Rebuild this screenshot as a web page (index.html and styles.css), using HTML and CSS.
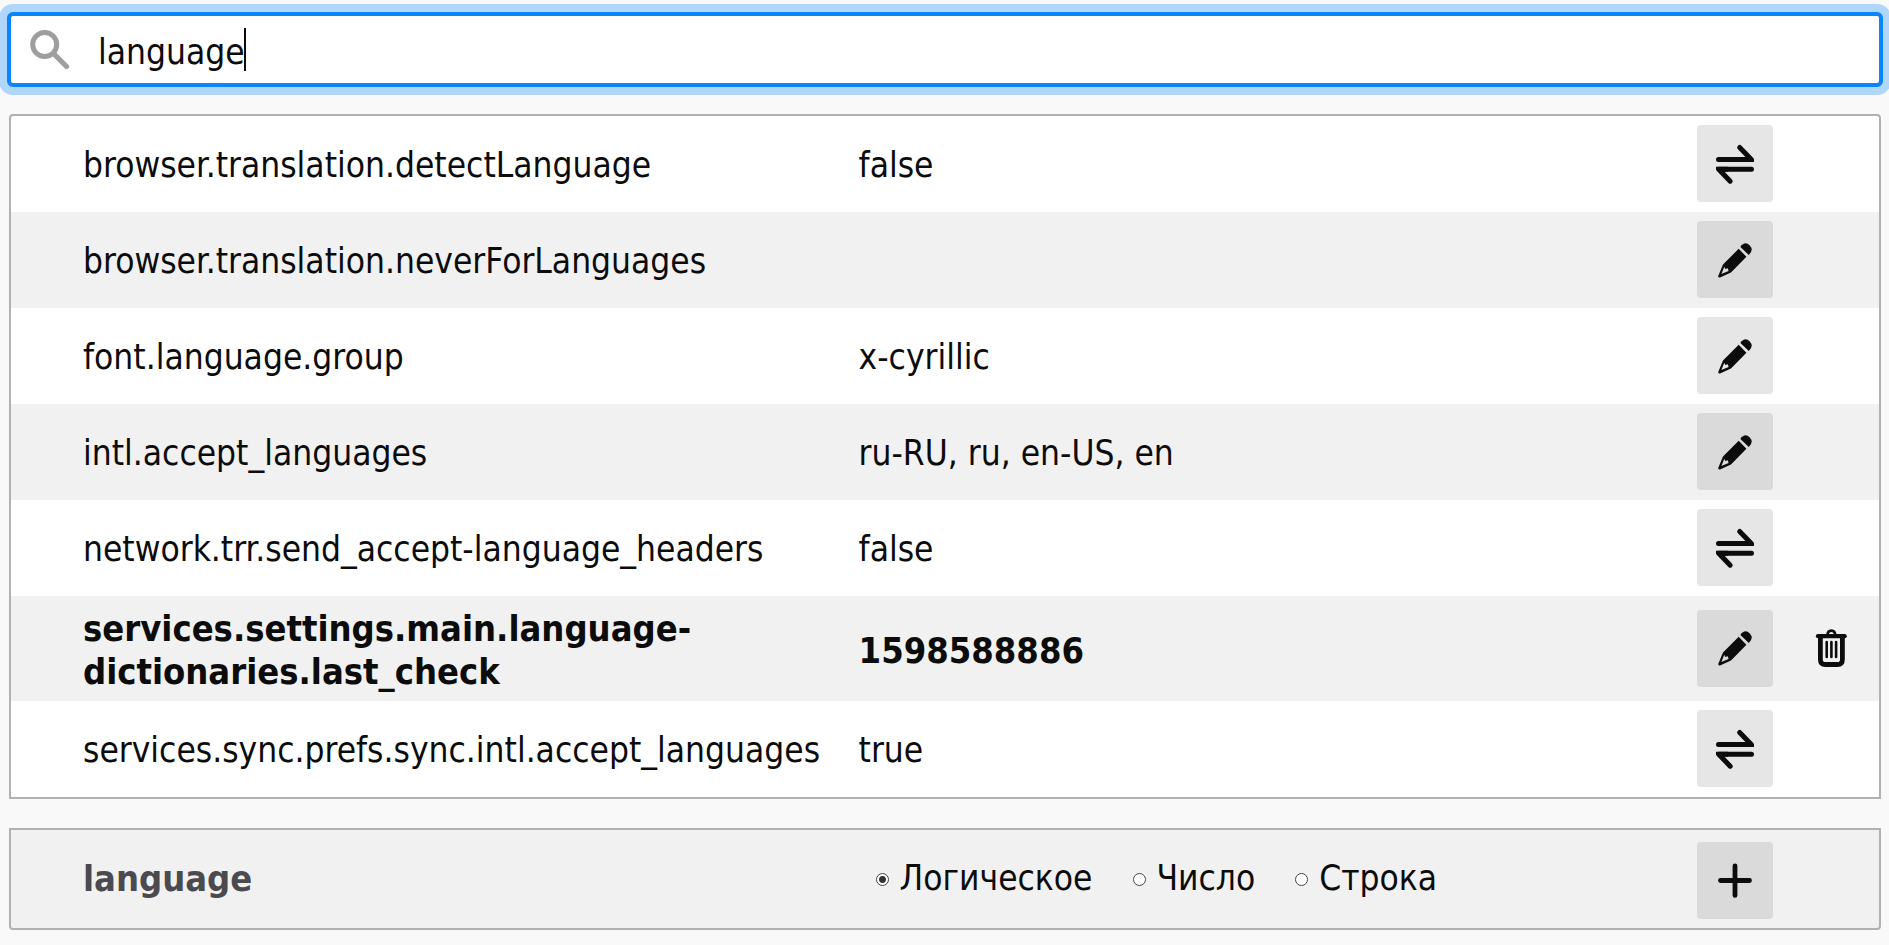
FILE: index.html
```html
<!DOCTYPE html>
<html lang="ru">
<head>
<meta charset="utf-8">
<title>about:config</title>
<link rel="stylesheet" href="styles.css">
</head>
<body>
<svg class="defs" aria-hidden="true">
  <symbol id="toggle" viewBox="0 0 76 76">
    <path d="M21.5 33.5H54.3L42.7 21.5M54.5 43.2H21.7L33.2 55.2" fill="none" stroke="currentColor" stroke-width="5" stroke-linecap="round" stroke-linejoin="round"/>
    <path d="M45 31H52L57 33V36H45ZM31 45.7H24L19 43.7V40.7H31Z" fill="currentColor"/>
  </symbol>
  <symbol id="pencil" viewBox="0 0 76 76">
    <path fill="currentColor" fill-rule="evenodd" d="M41.7 26.7L49.4 34.8L34 50.5L23 55.4Q20.9 55.8 21.3 53.8L26 42.6ZM27.3 44.7L24.4 51.9L31.6 49L30.8 46.2L28.3 47Z"/>
    <path fill="currentColor" d="M43.4 25Q45.6 21.3 48.8 21.3Q50.6 21.4 52.5 23.3Q54.7 25.6 54.7 27.8Q54.6 30.6 51.8 33Z"/>
  </symbol>
  <symbol id="trash" viewBox="0 0 76 76">
    <path d="M34.4 25.5C34.6 19 42.1 19 42.3 25.5" fill="none" stroke="currentColor" stroke-width="2.6"/>
    <path d="M25 26.2H51.7" stroke="currentColor" stroke-linecap="round" stroke-width="4.2"/>
    <path d="M27.4 28V49.5Q27.4 54.5 32.4 54.5H44.4Q49.4 54.5 49.4 49.5V28" fill="none" stroke="currentColor" stroke-width="4.8"/>
    <path d="M33.7 32V47M38.4 32V47M43.1 32V47" stroke="currentColor" stroke-width="2.6" stroke-linecap="round"/>
  </symbol>
  <symbol id="plus" viewBox="0 0 76 76">
    <path d="M38 24V53.4M23.5 38.5H52.5" stroke="currentColor" stroke-width="4.8" stroke-linecap="round"/>
  </symbol>
</svg>

<div class="search">
  <svg class="search-icon" viewBox="0 0 40 40" aria-hidden="true">
    <circle cx="14.7" cy="14.5" r="12" fill="none" stroke="#9e9e9e" stroke-width="5"/>
    <path d="M23.5 23.5L36.5 36.5" stroke="#9e9e9e" stroke-width="5.2" stroke-linecap="round"/>
  </svg>
  <input class="search-input" type="text" value="language" aria-label="Поиск">
  <span class="caret"></span>
</div>

<table class="prefs">
  <colgroup><col class="col-name"><col><col class="col-button"><col class="col-button"></colgroup>
  <tbody>
    <tr><th scope="row">browser.translation.detectLanguage</th><td>false</td><td class="cell"><button class="btn" aria-label="Переключить"><svg><use href="#toggle"/></svg></button></td><td class="cell"></td></tr>
    <tr><th scope="row">browser.translation.neverForLanguages</th><td></td><td class="cell"><button class="btn" aria-label="Изменить"><svg><use href="#pencil"/></svg></button></td><td class="cell"></td></tr>
    <tr><th scope="row">font.language.group</th><td>x-cyrillic</td><td class="cell"><button class="btn" aria-label="Изменить"><svg><use href="#pencil"/></svg></button></td><td class="cell"></td></tr>
    <tr><th scope="row">intl.accept_languages</th><td>ru-RU, ru, en-US, en</td><td class="cell"><button class="btn" aria-label="Изменить"><svg><use href="#pencil"/></svg></button></td><td class="cell"></td></tr>
    <tr><th scope="row">network.trr.send_accept-language_headers</th><td>false</td><td class="cell"><button class="btn" aria-label="Переключить"><svg><use href="#toggle"/></svg></button></td><td class="cell"></td></tr>
    <tr class="modified"><th scope="row">services.settings.main.language-<wbr>dictionaries.last_check</th><td>1598588886</td><td class="cell"><button class="btn" aria-label="Изменить"><svg><use href="#pencil"/></svg></button></td><td class="cell"><button class="btn ghost" aria-label="Сбросить"><svg><use href="#trash"/></svg></button></td></tr>
    <tr><th scope="row">services.sync.prefs.sync.intl.accept_languages</th><td>true</td><td class="cell"><button class="btn" aria-label="Переключить"><svg><use href="#toggle"/></svg></button></td><td class="cell"></td></tr>
  </tbody>
</table>

<form class="add">
  <div class="add-name">language</div>
  <div class="types">
    <label><input type="radio" name="type" checked>Логическое</label>
    <label><input type="radio" name="type">Число</label>
    <label><input type="radio" name="type">Строка</label>
  </div>
  <button class="btn add-btn" type="button" aria-label="Добавить"><svg><use href="#plus"/></svg></button>
</form>
</body>
</html>
```

FILE: styles.css
```css
* { box-sizing: border-box; }

body {
  margin: 0;
  padding: 12px 8px 0 9px;
  background: #f9f9fa;
  color: #0c0c0d;
  font: 35px/43px "DejaVu Sans Condensed", "DejaVu Sans", sans-serif;
  overflow: hidden;
}

.defs { display: none; }

.search {
  position: relative;
  display: flex;
  align-items: center;
  gap: 28px;
  height: 75px;
  margin: 0 -2px 27px;
  padding: 0 19px;
  background: #fff;
  border: 4px solid #0a84ff;
  border-radius: 6px;
  box-shadow: 0 0 0 8px #b0d6fc;
}

.search-icon { width: 40px; height: 40px; flex: none; }

.search-input {
  flex: 1;
  min-width: 0;
  height: 60px;
  padding: 4px 0 0;
  border: 0;
  outline: 0;
  background: none;
  color: inherit;
  font: inherit;
}

.caret {
  position: absolute;
  top: 12px;
  left: 233px;
  width: 2px;
  height: 43px;
  background: #0c0c0d;
}

.prefs {
  width: 100%;
  table-layout: fixed;
  border: 2px solid #b1b1b3;
  border-radius: 4px 4px 0 0;
  border-spacing: 0;
  background: #fff;
}

.col-name { width: 45%; }
.col-button { width: 96px; }

.prefs tr { height: 96px; }
.prefs tr:nth-child(even) { background: #f1f1f1; }
.prefs .modified { height: 105px; font-size: 36px; font-weight: 700; }

.prefs th {
  padding: 3px 8px 0 72px;
  text-align: left;
  font-weight: inherit;
}

.prefs td { padding: 3px 7px 0; }
.prefs .cell { padding: 0 10px 1px; }

.btn {
  display: block;
  width: 76px;
  height: 77px;
  padding: 0;
  border: 0;
  border-radius: 4px;
  background: #e6e6e6;
  color: #0c0c0d;
}

.prefs tr:nth-child(even) .btn, .add-btn { background: #dadada; }
.prefs tr:nth-child(even) .ghost { background: none; }

.btn svg { display: block; width: 76px; height: 76px; }

.add {
  display: grid;
  grid-template-columns: 45% 1fr 182px;
  align-items: center;
  height: 102px;
  margin-top: 29px;
  padding-top: 2px;
  border: 2px solid #b1b1b3;
  border-radius: 0 0 4px 4px;
  background: #f1f1f1;
}

.add-name {
  padding: 0 0 4px 72px;
  font-size: 36px;
  font-weight: 700;
  color: #4a4a4f;
}

.types { display: flex; gap: 40px; padding: 0 0 4px 24px; }
.types label { display: flex; align-items: center; gap: 11px; }

.types input {
  appearance: none;
  width: 13px;
  height: 13px;
  margin: 3px 0 0;
  border: 1px solid #444;
  border-radius: 50%;
  background: #fff;
}

.types input:checked { background: radial-gradient(circle, #333 0 3px, #fff 4px); }
```
